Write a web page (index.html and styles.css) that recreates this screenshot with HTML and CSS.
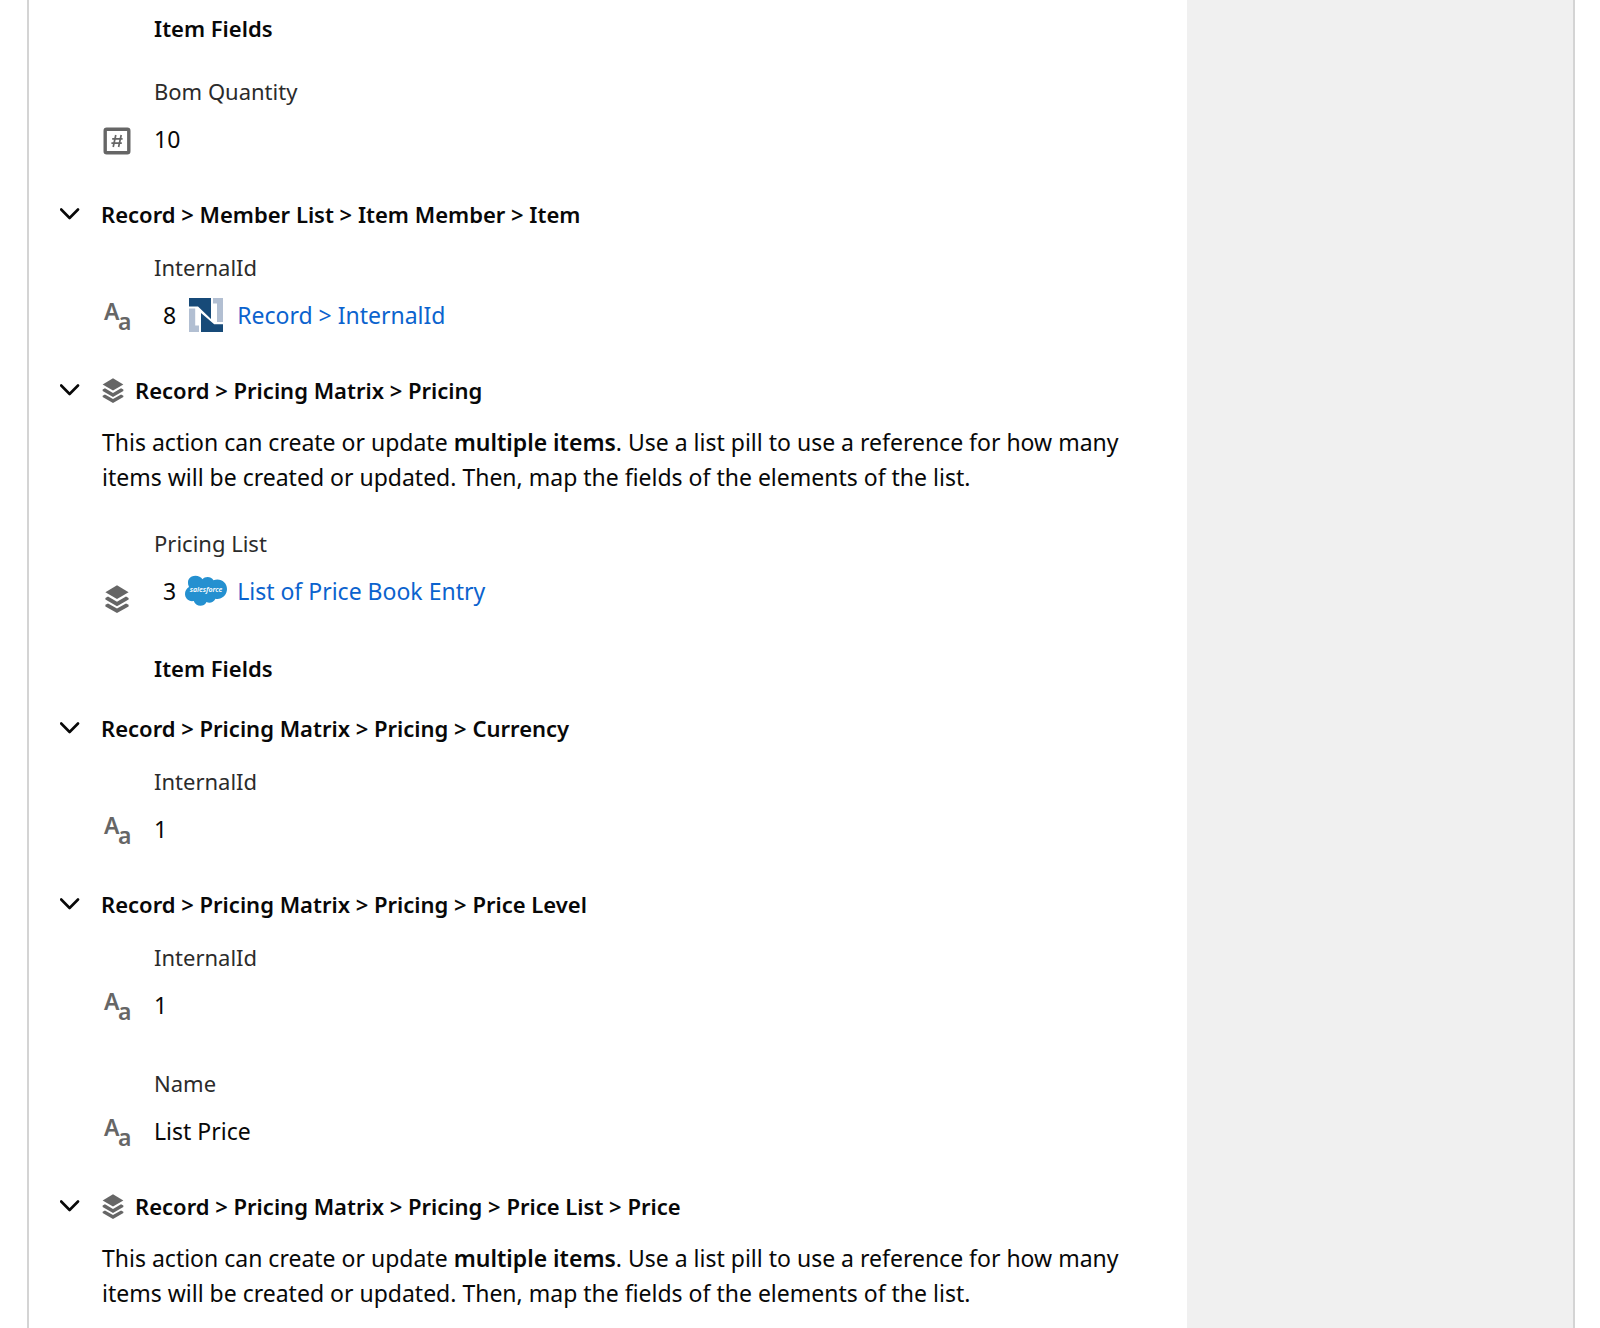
FILE: index.html
```
<!DOCTYPE html>
<html lang="en">
<head>
  <meta charset="UTF-8">
  <meta name="viewport" content="width=device-width, initial-scale=1.0">
  <title>Item Fields</title>
  <link rel="stylesheet" href="styles.css">
</head>
<body>
  <!-- Shared icons -->
  <svg class="sprite" aria-hidden="true">
    <symbol id="chevron" viewBox="0 0 20 12">
      <path d="M1.2 1.5 L9.6 10 L18 1.5" fill="none" stroke="#080808" stroke-width="2.6" stroke-linecap="round" stroke-linejoin="round"/>
    </symbol>
    <symbol id="layers" viewBox="0 0 24 28">
      <path d="M12 0.3 L23.6 7.2 L12 14.1 L0.4 7.2 Z"/>
      <path d="M0.4 13 L3 11.6 L12 16.8 L21 11.6 L23.6 13 V14.6 L12 21.2 L0.4 14.6 Z"/>
      <path d="M0.4 19.8 L3 18.4 L12 23.5 L21 18.4 L23.6 19.8 V21.4 L12 28 L0.4 21.4 Z"/>
    </symbol>
    <symbol id="text-type" viewBox="0 0 28 28">
      <text x="1" y="17" class="type-upper">A</text>
      <text x="15" y="27" class="type-lower">a</text>
    </symbol>
    <symbol id="number-type" viewBox="0 0 28 28">
      <rect x="2.2" y="2.2" width="23.6" height="23.6" rx="1.5" fill="none" stroke="#666" stroke-width="3.4"/>
      <path d="M12.8 8 L10.2 20 M18.2 8 L15.6 20 M9.2 11.800 H19.6 M8.4 16.200 H18.8" fill="none" stroke="#666" stroke-width="1.7"/>
    </symbol>
  </svg>

  <div class="frame">
    <main class="content">
      <h4 class="item-fields">Item Fields</h4>
      <div class="field first">
        <div class="label">Bom Quantity</div>
        <svg class="type-icon"><use href="#number-type"/></svg>
        <div class="value">10</div>
      </div>

      <section class="group">
        <div class="group-header">
          <button class="toggle" type="button" aria-label="Collapse"><svg><use href="#chevron"/></svg></button>
          <h3>Record &gt; Member List &gt; Item Member &gt; Item</h3>
        </div>
        <div class="field">
          <div class="label">InternalId</div>
          <svg class="type-icon"><use href="#text-type"/></svg>
          <div class="value pill">
            <span class="step">8</span>
            <svg class="logo" viewBox="0 0 42 36" aria-hidden="true">
              <path d="M4 1 H26 V22 L13 9.6 H4 Z" fill="#174a78"/>
              <path d="M28 1 H38 V25 H32 V6.500 H28 Z" fill="#b2bfd2"/>
              <path d="M4 11.500 H10.200 V28.500 H14 V35 H4 Z" fill="#b2bfd2"/>
              <path d="M16 35 V16 L29.200 27.200 H38 V35 Z" fill="#174a78"/>
            </svg>
            <a href="#">Record &gt; InternalId</a>
          </div>
        </div>
      </section>

      <section class="group">
        <div class="group-header">
          <button class="toggle" type="button" aria-label="Collapse"><svg><use href="#chevron"/></svg></button>
          <svg class="list-icon"><use href="#layers"/></svg>
          <h3>Record &gt; Pricing Matrix &gt; Pricing</h3>
        </div>
        <p class="hint">This action can create or update <b>multiple items</b>. Use a list pill to use a reference for how many items will be created or updated. Then, map the fields of the elements of the list.</p>
        <div class="field list-field">
          <div class="label">Pricing List</div>
          <svg class="type-icon"><use href="#layers"/></svg>
          <div class="value pill">
            <span class="step">3</span>
            <svg class="logo" viewBox="0 0 42 36" aria-hidden="true">
              <path d="M17.500 6.200 C20 3 26 3 28.500 7.200 C35 4.500 42 9 42 16 C42 22.500 36 27 30.500 25.800 C28.500 29.500 24.500 30.500 21.500 29 C19 34.500 10.500 34 8.800 28 C3.500 29 0 25 0 21 C0 18 1.500 15.500 4 14 C1 7 5 2.800 10.500 2.800 C13.500 2.800 16 4 17.500 6.200 Z" fill="#2490d0"/>
              <text x="21" y="19" class="cloud-text">salesforce</text>
            </svg>
            <a href="#">List of Price Book Entry</a>
          </div>
        </div>
        <h4 class="item-fields">Item Fields</h4>
      </section>

      <section class="group nested">
        <div class="group-header">
          <button class="toggle" type="button" aria-label="Collapse"><svg><use href="#chevron"/></svg></button>
          <h3>Record &gt; Pricing Matrix &gt; Pricing &gt; Currency</h3>
        </div>
        <div class="field">
          <div class="label">InternalId</div>
          <svg class="type-icon"><use href="#text-type"/></svg>
          <div class="value">1</div>
        </div>
      </section>

      <section class="group">
        <div class="group-header">
          <button class="toggle" type="button" aria-label="Collapse"><svg><use href="#chevron"/></svg></button>
          <h3>Record &gt; Pricing Matrix &gt; Pricing &gt; Price Level</h3>
        </div>
        <div class="field">
          <div class="label">InternalId</div>
          <svg class="type-icon"><use href="#text-type"/></svg>
          <div class="value">1</div>
        </div>
        <div class="field">
          <div class="label">Name</div>
          <svg class="type-icon"><use href="#text-type"/></svg>
          <div class="value">List Price</div>
        </div>
      </section>

      <section class="group">
        <div class="group-header">
          <button class="toggle" type="button" aria-label="Collapse"><svg><use href="#chevron"/></svg></button>
          <svg class="list-icon"><use href="#layers"/></svg>
          <h3>Record &gt; Pricing Matrix &gt; Pricing &gt; Price List &gt; Price</h3>
        </div>
        <p class="hint">This action can create or update <b>multiple items</b>. Use a list pill to use a reference for how many items will be created or updated. Then, map the fields of the elements of the list.</p>
      </section>
    </main>
    <aside class="side"></aside>
  </div>
</body>
</html>
```

FILE: styles.css
```
* {
  box-sizing: border-box;
}
body {
  margin: 0;
  background-color: #fff;
  color: #080808;
  font-family: "Noto Sans", "Open Sans", sans-serif;
  font-size: 23px;
  line-height: 32px;
}
h3, h4, p {
  margin: 0;
}
h3, h4 {
  font-size: 22px;
  font-weight: 600;
}
b {
  font-weight: 600;
}
.sprite {
  display: none;
}
.frame {
  display: grid;
  grid-template-columns: 3fr 1fr;
  min-height: 100vh;
  margin: 0 25px 0 27px;
  border-left: 2px solid #d4d4d4;
  border-right: 2px solid #d4d4d4;
}
.content {
  padding: 12px 30px 16px 31px;
}
.side {
  background-color: #f0f0f0;
}

/* Group headers */
.group {
  margin-top: 43px;
}
.group.nested {
  margin-top: 28px;
}
.group-header {
  display: flex;
  align-items: center;
}
.toggle {
  display: flex;
  width: 41px;
  padding: 0;
  border: 0;
  background: none;
  cursor: pointer;
}
.toggle svg {
  width: 20px;
  height: 12px;
}
.list-icon {
  width: 24px;
  height: 25px;
  margin-right: 10px;
  fill: #666;
}
.hint {
  margin: 19px 0 32px 42px;
  line-height: 35px;
}
.group:last-child .hint {
  margin-bottom: 0;
}
.item-fields {
  padding-left: 94px;
}

/* Fields */
.field {
  display: grid;
  grid-template-columns: 51px 1fr;
  row-gap: 16px;
  align-items: center;
  margin-top: 21px;
  padding-left: 43px;
}
.field + .field {
  margin-top: 46px;
}
.field.first {
  margin-top: 31px;
}
.hint + .field {
  margin-top: 32px;
}
.field + .item-fields {
  margin-top: 45px;
}
.label {
  grid-column: 2;
  color: #2b2b2b;
  font-size: 22px;
}
.value {
  height: 32px;
}
.type-icon {
  width: 28px;
  height: 28px;
  margin-top: 4px;
  fill: #666;
}
.list-field .type-icon {
  align-self: end;
  margin-bottom: -6px;
}
.pill {
  display: flex;
  align-items: center;
  padding-left: 9px;
}
.step {
  margin-right: 9px;
}
.logo {
  width: 42px;
  height: 36px;
  margin-right: 10px;
}
.pill a {
  color: #0b63ce;
  text-decoration: none;
}
.type-upper {
  font-size: 23px;
  font-weight: 600;
}
.type-lower {
  font-size: 23px;
  font-weight: 600;
}
.cloud-text {
  fill: #fff;
  font-size: 7px;
  font-style: italic;
  font-weight: 600;
  text-anchor: middle;
}
```
